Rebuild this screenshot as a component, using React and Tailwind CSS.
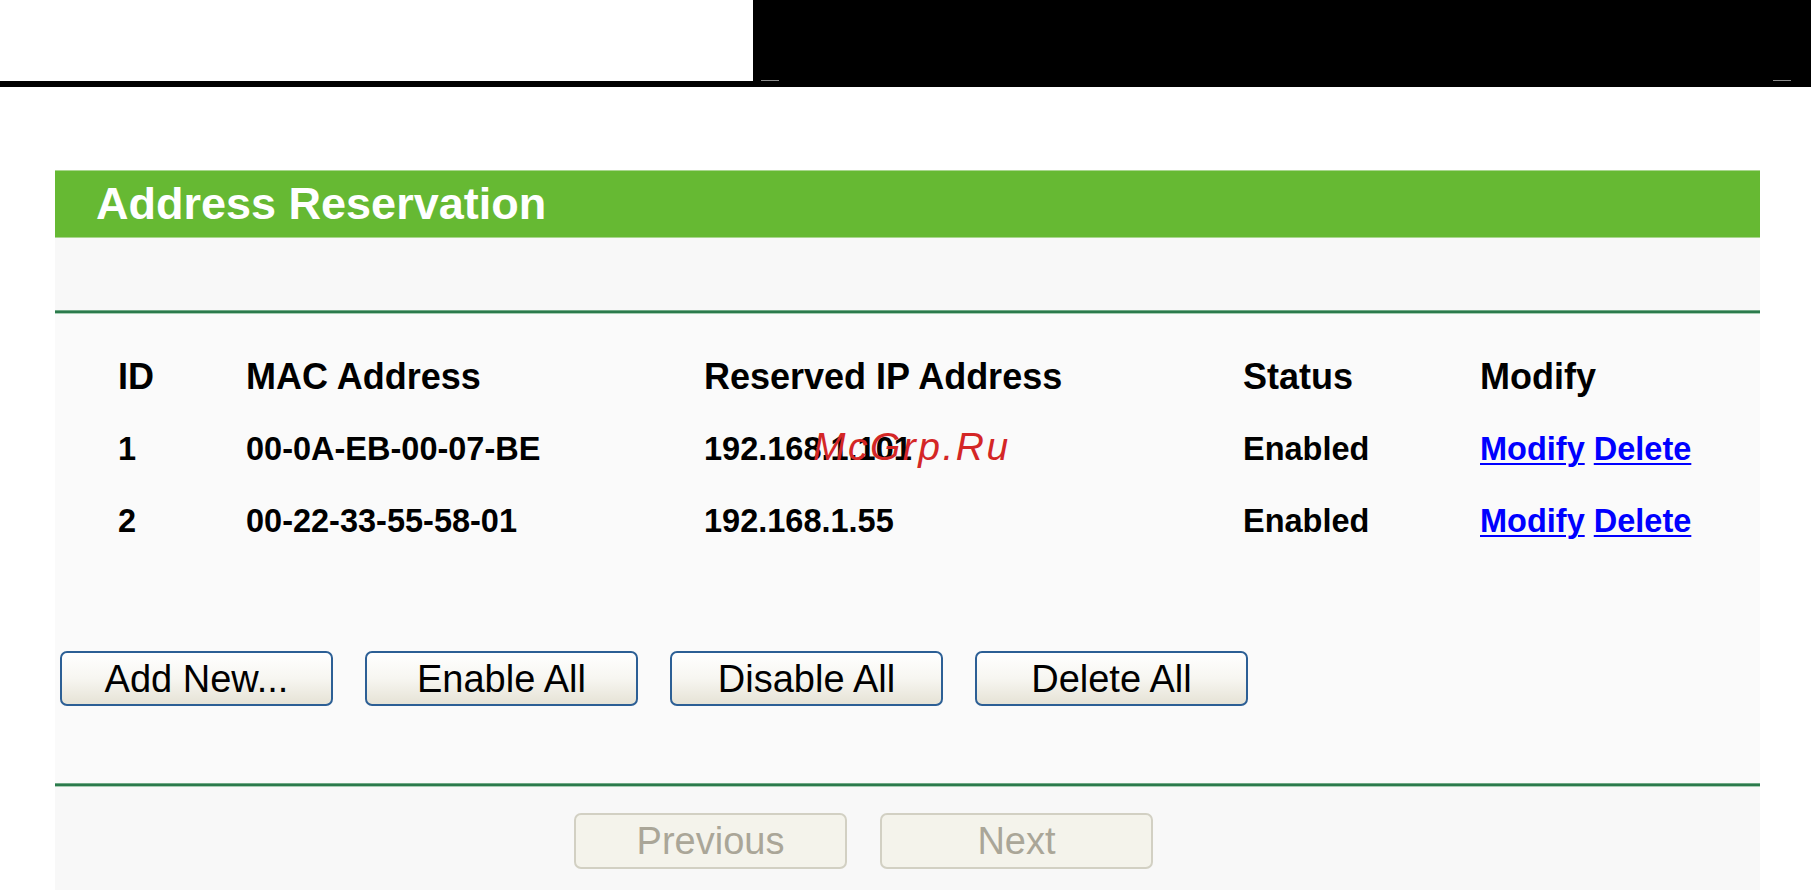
import React from 'react';

const rows = [
  { id: 1, mac: '00-0A-EB-00-07-BE', ip: '192.168.1.101', status: 'Enabled' },
  { id: 2, mac: '00-22-33-55-58-01', ip: '192.168.1.55', status: 'Enabled' },
];

const Separator = () => (
  <div className="h-[4px] bg-[#2b7a4c] border-t border-[#6fa985] border-b border-b-[#a7cdb3]" />
);

const ActionButton = ({ children }) => (
  <button className="w-[273px] h-[55px] rounded-[7px] border-2 border-[#2c5f95] bg-linear-to-b from-white via-[#f7f6f1] to-[#e6e3d6] text-[38px] leading-none text-black">
    {children}
  </button>
);

const DisabledButton = ({ children }) => (
  <button disabled className="w-[273px] h-[56px] rounded-[7px] border-2 border-[#d2d0c3] bg-[#f4f3eb] text-[38px] leading-none text-[#aaa698]">
    {children}
  </button>
);

const App = () => {
  return (
    <div className="w-[1811px] h-[890px] overflow-hidden bg-white font-['Liberation_Sans',Arial,sans-serif]">
      {/* top strip */}
      <div className="flex h-[87px]">
        <div className="w-[753px] bg-white border-b-[6px] border-black" />
        <div className="relative flex-1 bg-black">
          <div className="absolute left-[8px] top-[80px] w-[18px] h-[1px] bg-[#8c8c8c]" />
          <div className="absolute right-[20px] top-[80px] w-[18px] h-[1px] bg-[#8c8c8c]" />
        </div>
      </div>

      <div className="ml-[55px] mt-[83px] w-[1705px]">
        {/* title bar */}
        <div className="h-[68px] bg-[#66b933] border-y border-[#a9d68e] pl-[41px] text-[45px] font-bold leading-[66px] text-white">
          Address Reservation
        </div>
        <div className="h-[72px] bg-[#f8f8f8]" />
        <Separator />

        {/* table */}
        <div className="bg-[#fafafa] pt-[27px] pl-[63px]">
          <div className="grid grid-cols-[128px_458px_539px_237px_1fr] h-[72px] items-center text-[36px] font-bold leading-[72px] text-black">
            <div>ID</div>
            <div>MAC Address</div>
            <div>Reserved IP Address</div>
            <div>Status</div>
            <div>Modify</div>
          </div>
          {rows.map((row) => (
            <div key={row.id} className="grid grid-cols-[128px_458px_539px_237px_1fr] h-[72px] items-center text-[32.5px] font-bold leading-[72px] text-black">
              <div>{row.id}</div>
              <div>{row.mac}</div>
              <div className="relative">
                {row.ip}
                {row.id === 1 && (
                  <span className="absolute left-[109px] top-[14px] text-[39px] italic font-normal leading-none tracking-[2.5px] text-[#d42626]">
                    McGrp.Ru
                  </span>
                )}
              </div>
              <div>{row.status}</div>
              <div className="text-[#0000ff]">
                <a href="#" className="underline decoration-2 underline-offset-[3px]">Modify</a>{' '}
                <a href="#" className="underline decoration-2 underline-offset-[3px]">Delete</a>
              </div>
            </div>
          ))}

          {/* action buttons */}
          <div className="flex gap-[32px] -ml-[58px] pt-[94px] pb-[77px]">
            <ActionButton>Add New...</ActionButton>
            <ActionButton>Enable All</ActionButton>
            <ActionButton>Disable All</ActionButton>
            <ActionButton>Delete All</ActionButton>
          </div>
        </div>
        <Separator />

        {/* paging */}
        <div className="flex gap-[33px] bg-[#f8f8f8] pl-[519px] pt-[26px] h-[120px]">
          <DisabledButton>Previous</DisabledButton>
          <DisabledButton>Next</DisabledButton>
        </div>
      </div>
    </div>
  );
};

export default App;
